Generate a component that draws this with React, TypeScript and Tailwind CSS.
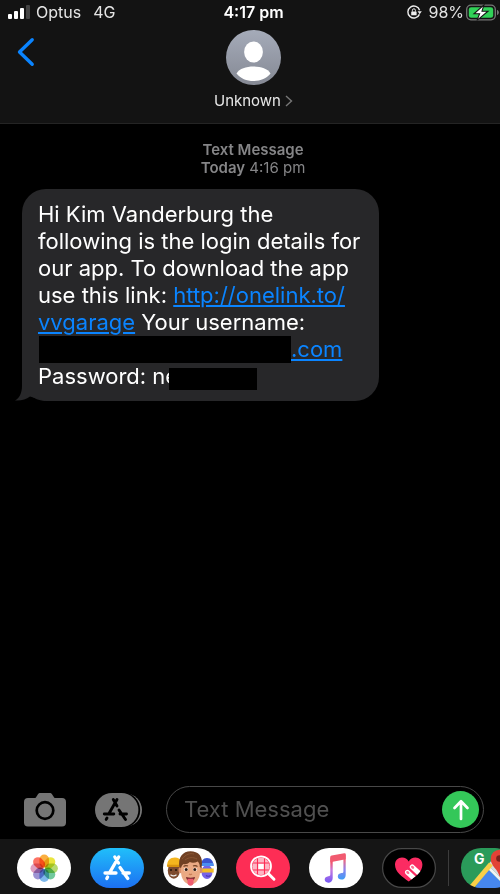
import React from 'react';

const SignalIcon = () => (
  <svg width="22" height="14" viewBox="0 0 22 14" aria-hidden="true">
    <rect x="0" y="9" width="4" height="5" rx="1" fill="#fff" />
    <rect x="6" y="6" width="4" height="8" rx="1" fill="#fff" />
    <rect x="12" y="3" width="4" height="11" rx="1" fill="#fff" />
    <rect x="18" y="0" width="4" height="14" rx="1" fill="#444" />
  </svg>
);

const RotationLockIcon = () => (
  <svg width="16" height="16" viewBox="0 0 16 16" fill="none" aria-hidden="true">
    <path d="M13.6 6.2A6 6 0 1 0 13.4 10.4" stroke="#eee" strokeWidth="1.4" />
    <path d="M11.6 7.2h4.2l-2.1 3z" fill="#eee" />
    <rect x="5.2" y="7.4" width="5.4" height="3.9" rx=".6" fill="#eee" />
    <path d="M6.4 7.6V6.3a1.5 1.5 0 0 1 3 0v1.3" stroke="#eee" strokeWidth="1" />
  </svg>
);

const BatteryIcon = () => (
  <svg width="33" height="17" viewBox="0 0 33 17" aria-hidden="true">
    <rect x=".7" y="1.2" width="28.6" height="14.6" rx="4.2" fill="none" stroke="#777" strokeWidth="1.3" />
    <path d="M31 6v5c1.2-.3 1.9-1.3 1.9-2.5S32.2 6.3 31 6z" fill="#777" />
    <rect x="2.8" y="3.2" width="24.4" height="10.6" rx="2.4" fill="#31d158" />
    <path d="M18 .8 8 9.8h5.600L11 16.400l11-9.200h-6z" fill="#fff" stroke="#131313" strokeWidth="1.100" />
  </svg>
);

const Avatar = () => (
  <svg width="55" height="55" viewBox="0 0 55 55" aria-hidden="true">
    <defs>
      <linearGradient id="avatarFill" x1="0" y1="0" x2="0" y2="1">
        <stop offset="0" stopColor="#a5abb9" />
        <stop offset="1" stopColor="#858994" />
      </linearGradient>
    </defs>
    <circle cx="27.5" cy="27.5" r="27.5" fill="url(#avatarFill)" />
    <ellipse cx="27.5" cy="22" rx="9.4" ry="10.5" fill="#fff" />
    <path d="M10.5 43.5C13.5 38.500 20 36.500 27.500 36.500s14 2 17 7c-4 5-10 7.500-17 7.500s-13-2.500-17-7.500z" fill="#fff" />
  </svg>
);

const CameraIcon = () => (
  <svg width="42" height="34" viewBox="0 0 42 34" aria-hidden="true">
    <path
      d="M4 5h6.5c1 0 1.4-.5 2-1.5l1-1.6C14.2.6 15 0 16.4 0h9.2c1.4 0 2.2.6 2.9 1.9l1 1.6c.6 1 1 1.5 2 1.5H38a4 4 0 0 1 4 4v20.5a4 4 0 0 1-4 4H4a4 4 0 0 1-4-4V9a4 4 0 0 1 4-4z"
      fill="#757575"
    />
    <circle cx="21" cy="17.5" r="8.3" fill="none" stroke="#000" strokeWidth="2.7" />
  </svg>
);

const AppsIcon = () => (
  <svg width="47" height="34" viewBox="0 0 47 34" aria-hidden="true">
    <rect x="5" y="0.5" width="42" height="33" rx="16.5" fill="#757575" />
    <rect x="2" y="-1" width="43.2" height="36" rx="18" fill="#000" />
    <rect x="0" y="0" width="43.4" height="34" rx="17" fill="#757575" />
    <path
      d="M18.300 6.500 22 13M24 17l6.500 9.500M22 6.500 14 20.500M12 25l-.8 1.400M9.300 21h9.500M25 21h6.500"
      stroke="#000"
      strokeWidth="2.9"
      strokeLinecap="round"
      fill="none"
    />
  </svg>
);

const petals = ['#f9a01f', '#e6e01c', '#a9d257', '#58c08c', '#66ace8', '#8c80cb', '#d98fb6', '#fb5a4a'];

const PhotosIcon = () => (
  <svg width="54" height="40" viewBox="0 0 54 40" aria-hidden="true">
    <rect width="54" height="40" rx="20" fill="#fff" />
    {petals.map((color, i) => (
      <rect
        key={color}
        x="22.4"
        y="6.6"
        width="9.6"
        height="13"
        rx="4.8"
        fill={color}
        fillOpacity=".85"
        transform={`rotate(${i * 45} 27.2 20.3)`}
        className="mix-blend-multiply"
      />
    ))}
  </svg>
);

const AppStoreIcon = () => (
  <svg width="54" height="40" viewBox="0 0 54 40" aria-hidden="true">
    <defs>
      <linearGradient id="storeFill" x1="0" y1="0" x2="0" y2="1">
        <stop offset="0" stopColor="#20bffa" />
        <stop offset="1" stopColor="#1c70f2" />
      </linearGradient>
    </defs>
    <rect width="54" height="40" rx="20" fill="url(#storeFill)" />
    <path
      d="M24.8 9 28.5 15M30 19.5 37.8 30.5M28.7 9 19.5 24.8M17.6 29l-.8 1.6M15 25h11M33 25h6.3"
      stroke="#fff"
      strokeWidth="3.3"
      strokeLinecap="round"
      fill="none"
    />
  </svg>
);

const MemojiIcon = () => (
  <svg width="54" height="40" viewBox="0 0 54 40" aria-hidden="true">
    <rect width="54" height="40" rx="20" fill="#fff" />
    {/* left face with the yellow beanie */}
    <ellipse cx="10.8" cy="22.5" rx="6" ry="8.3" fill="#7d4b2e" />
    <path d="M4 18.500c0-6 3-9 8-9 3 0 5 1.500 6 3.500v5.500H4z" fill="#f4b51e" />
    <path d="M4 16.800h13v2.200H4.500z" fill="#d8920f" />
    <circle cx="8" cy="22" r="1" fill="#22130b" />
    <circle cx="13" cy="22" r="1" fill="#22130b" />
    <path d="M7.500 26.800c2 1.500 4 1.500 6 0" stroke="#eee" strokeWidth="1.200" fill="none" />
    {/* right face with the blue hat */}
    <ellipse cx="44" cy="24" rx="5.5" ry="7" fill="#7563e8" />
    <path d="M38 18c0-5 2-8 6-8s6.500 3 6.500 8z" fill="#3a55d0" />
    <path d="M38 15h12.200l.5 3H38z" fill="#4b8ff0" />
    <path d="M38 20.500h12.700v4H38z" fill="#f3bd25" />
    <path d="M43 27.500c1.500 1 3 1 4.500 0" stroke="#4a36b0" strokeWidth="1.200" fill="none" />
    {/* front face */}
    <ellipse cx="17.8" cy="22" rx="2.3" ry="3.3" fill="#d98f69" />
    <ellipse cx="37.2" cy="22" rx="2.3" ry="3.3" fill="#d98f69" />
    <path d="M18 17c0-7 4-10 9.500-10S37 10 37 17v7c0 7-4.500 12.500-9.500 12.500S18 31 18 24z" fill="#eaa983" />
    <path d="M16.500 20C14.500 9 20 3.300 27.500 3.300S41 8 38.500 20L36.800 19c0-2.500-.5-4-2-5.500-3 1.500-6 1.500-8 .5-2 2-4.500 2.500-6.300 2-1.200 1-2 2-2.200 3.500z" fill="#704023" />
    <path d="M19 11c4-5 8-6 12-5M22 12c4-3 8-3 12-1" stroke="#8a5531" strokeWidth="1" fill="none" />
    <path d="M20.500 18.500c1.500-1.100 3-1.100 4.500-.4M30 18.100c1.500-.7 3-.7 4.500.4" stroke="#704023" strokeWidth="1.100" fill="none" />
    <ellipse cx="23" cy="21.500" rx="2.100" ry="1.800" fill="#fff" />
    <ellipse cx="32" cy="21.500" rx="2.100" ry="1.800" fill="#fff" />
    <circle cx="23.200" cy="21.500" r="1.500" fill="#32190e" />
    <circle cx="31.800" cy="21.500" r="1.500" fill="#32190e" />
    <path d="M26 26c1 .8 2 .8 3 0" stroke="#c77d57" strokeWidth="1.200" fill="none" />
    <path d="M23 29c3 1 6 1 9 0-.5 3-2.300 4-4.500 4S23.500 32 23 29z" fill="#75242b" />
    <path d="M24.500 30.800h6v4c0 4-6 4-6 0z" fill="#ef5d70" />
  </svg>
);

const ImageSearchIcon = () => (
  <svg width="54" height="40" viewBox="0 0 54 40" aria-hidden="true">
    <defs>
      <clipPath id="lens">
        <circle cx="25" cy="18.3" r="8.7" />
      </clipPath>
    </defs>
    <rect width="54" height="40" rx="20" fill="#fd2d55" />
    <g clipPath="url(#lens)">
      <rect x="15" y="8" width="20" height="20" fill="#fdb5c4" />
      <rect x="22.3" y="16" width="5.4" height="5" fill="#fff" />
      <path d="M21.5 8v21M28.5 8v21M15 15h20M15 22h20" stroke="#fd2d55" strokeWidth="1.1" />
    </g>
    <circle cx="25" cy="18.3" r="10" fill="none" stroke="#fff" strokeWidth="1.8" />
    <path d="M32.5 25.8 38 31.2" stroke="#fff" strokeWidth="2.9" strokeLinecap="round" />
  </svg>
);

const MusicIcon = () => (
  <svg width="54" height="40" viewBox="0 0 54 40" aria-hidden="true">
    <defs>
      <linearGradient id="leftNote" x1="0" y1="0" x2="0" y2="1">
        <stop offset=".2" stopColor="#f2566f" />
        <stop offset=".5" stopColor="#c57ae0" />
        <stop offset="1" stopColor="#7457f4" />
      </linearGradient>
      <linearGradient id="rightNote" x1="0" y1="0" x2="0" y2="1">
        <stop offset=".2" stopColor="#f2667c" />
        <stop offset=".6" stopColor="#8d83ee" />
        <stop offset="1" stopColor="#3c9df6" />
      </linearGradient>
    </defs>
    <rect width="54" height="40" rx="20" fill="#fff" />
    <path d="M21.300 9.500h2.400V30c0 3-2 4.700-4.500 4.700-2 0-3.500-1.300-3.500-3.100 0-2 1.500-3 3.600-3.400 1.500-.3 2-.6 2-1.700z" fill="url(#leftNote)" />
    <path d="M34.400 6.500h2.300v20.400c0 3-1.900 4.700-4.400 4.700-2 0-3.500-1.300-3.500-3.100 0-2 1.500-3 3.600-3.400 1.500-.3 2-.6 2-1.700z" fill="url(#rightNote)" />
    <path d="M21.300 9.300c0-1 .4-1.500 1.400-1.700l12.500-2.300c1-.2 1.500.2 1.500 1.200v4.800l-15.400 2.900z" fill="#f15a70" />
  </svg>
);

const DigitalTouchIcon = () => (
  <svg width="54" height="40" viewBox="0 0 54 40" aria-hidden="true">
    <defs>
      <clipPath id="heart">
        <path d="M26.700 33.500C20 28.500 13 24 13 16.700c0-4.200 3-7.200 7-7.200 3 0 5.300 1.500 6.700 4 1.400-2.500 3.700-4 6.700-4 4 0 7 3 7 7.200 0 7.300-7 11.800-13.700 16.800z" />
      </clipPath>
    </defs>
    <rect x=".6" y=".6" width="52.8" height="38.8" rx="19.4" fill="#000" stroke="#484848" strokeWidth="1.2" />
    <g clipPath="url(#heart)">
      <rect x="12" y="8" width="30" height="27" fill="#fb2b62" />
      <path d="M30.300 19 41 29M25.500 24.300 36 34" stroke="#fff" strokeWidth="5" strokeLinecap="round" />
      <path d="m30.200 18.900.8.8M25.400 24.200l.8.8" stroke="#fb6f92" strokeWidth="2.400" strokeLinecap="round" />
    </g>
  </svg>
);

const MapsIcon = () => (
  <svg width="54" height="40" viewBox="0 0 54 40" aria-hidden="true">
    <defs>
      <clipPath id="mapPill">
        <rect width="54" height="40" rx="20" />
      </clipPath>
    </defs>
    <g clipPath="url(#mapPill)">
      <rect width="54" height="40" fill="#2a9b5a" />
      <path d="M12 42 27 21 48 42z" fill="#4687ee" />
      <path d="M27 17 54 44V14L34 8z" fill="#d7dbdf" />
      <path d="m27.500 19.500 22 22" stroke="#f3f3f3" strokeWidth="3" />
      <path d="M8 42 30 16" stroke="#f9cf48" strokeWidth="5" />
      <path d="M38.500 29c-1-8-8.800-10-8.800-18.500a8.800 8.800 0 0 1 17.600 0C47.300 19 39.500 21 38.500 29z" fill="#e24236" />
      <circle cx="38.5" cy="10.5" r="3.3" fill="#7b211c" />
      <text x="13" y="16" fill="#fff" fontSize="14" fontWeight="700" fontFamily="Inter, sans-serif">G</text>
    </g>
  </svg>
);

const apps = [
  { name: 'Photos', Icon: PhotosIcon },
  { name: 'App Store', Icon: AppStoreIcon },
  { name: 'Memoji Stickers', Icon: MemojiIcon },
  { name: 'Image search', Icon: ImageSearchIcon },
  { name: 'Music', Icon: MusicIcon },
  { name: 'Digital Touch', Icon: DigitalTouchIcon },
];

const StatusBar: React.FC = () => (
  <div className="grid grid-cols-[1fr_auto_1fr] items-center h-6 pl-2 pr-px text-base text-[#e4e4e4]">
    <div className="flex items-center gap-[6px]">
      <SignalIcon />
      <span>Optus</span>
      <span className="ml-[6px]">4G</span>
    </div>
    <span className="font-semibold text-white">4:17 pm</span>
    <div className="flex items-center justify-end">
      <RotationLockIcon />
      <span className="ml-[6px] mr-[2px]">98%</span>
      <BatteryIcon />
    </div>
  </div>
);

const ChatHeader: React.FC = () => (
  <div className="grid grid-cols-[1fr_auto_1fr] items-start pl-[17px] pr-[10px] pt-[6px]">
    <button type="button" aria-label="Back" className="mt-[7px] w-fit">
      <svg width="18" height="30" viewBox="0 0 18 30" fill="none" aria-hidden="true">
        <path d="M15.2 2.7 2.5 15l12.7 12.3" stroke="#0a84ff" strokeWidth="3.4" strokeLinecap="round" strokeLinejoin="round" />
      </svg>
    </button>
    <button type="button" className="flex flex-col items-center gap-[6px]">
      <Avatar />
      <span className="flex items-center gap-1 text-[15px] leading-5 text-[#e8e8e8]">
        Unknown
        <svg width="8" height="12" viewBox="0 0 8 12" fill="none" aria-hidden="true">
          <path d="m1 1 5.5 5L1 11" stroke="#777" strokeWidth="1.4" />
        </svg>
      </span>
    </button>
  </div>
);

const MessageBubble: React.FC = () => (
  <div className="relative ml-[22px] w-[357px] max-w-[90%] rounded-[24px] bg-[#272729] pl-4 pr-3 pt-3 pb-[11px] text-[22px] leading-[27px] text-white">
    <svg className="absolute -left-[7px] bottom-0" width="30" height="24" viewBox="0 0 30 24" aria-hidden="true">
      <path d="M7 0v9c0 7-2.500 12-7 14.500 6 .5 11-1 15-4L30 24V0z" fill="#272729" />
    </svg>
    <p className="relative whitespace-nowrap">
      Hi Kim Vanderburg the<br />
      following is the login details for<br />
      our app. To download the app<br />
      use this link:{' '}
      <a href="#garage" className="text-[#0a84ff] underline decoration-2 underline-offset-2">
        http://onelink.to/<br />
        vvgarage
      </a>{' '}
      Your username:<br />
      <a href="#username" className="text-[#0a84ff] underline decoration-2 underline-offset-2">
        <span className="ml-px inline-block h-[27px] w-[252px] bg-black align-top" />
        .com
      </a>
      <br />
      Password: ne
      <span className="relative -ml-[9px] mt-[5px] inline-block h-[22px] w-[88px] bg-black align-top" />
    </p>
  </div>
);

const Composer: React.FC = () => (
  <form className="flex items-center pl-6 pr-4 pb-[6px]" onSubmit={(e) => e.preventDefault()}>
    <button type="button" aria-label="Camera" className="shrink-0">
      <CameraIcon />
    </button>
    <button type="button" aria-label="Apps" className="ml-[29px] shrink-0">
      <AppsIcon />
    </button>
    <div className="ml-6 flex h-[47px] min-w-0 flex-1 items-center rounded-full border border-[#484848] pl-[17px] pr-1">
      <input
        type="text"
        aria-label="Text Message"
        placeholder="Text Message"
        className="min-w-0 flex-1 bg-transparent text-[22px] text-white outline-none placeholder:text-[#505050]"
      />
      <button type="submit" aria-label="Send" className="flex size-[37px] shrink-0 items-center justify-center rounded-full bg-[#34c759]">
        <svg width="18" height="22" viewBox="0 0 18 22" fill="none" aria-hidden="true">
          <path d="M9 20V2.5M2.5 9 9 2.3 15.5 9" stroke="#fff" strokeWidth="2.7" strokeLinecap="round" strokeLinejoin="round" />
        </svg>
      </button>
    </div>
  </form>
);

const AppDrawer: React.FC = () => (
  <nav aria-label="iMessage apps" className="flex h-[55px] items-center gap-[19px] overflow-hidden bg-[#151515] pl-[17px] pt-[2px]">
    {apps.map(({ name, Icon }) => (
      <button key={name} type="button" aria-label={name} className="shrink-0">
        <Icon />
      </button>
    ))}
    <div className="-ml-[7px] flex shrink-0 items-center gap-3">
      <div className="h-9 w-px bg-[#3c3c3c]" />
      <button type="button" aria-label="Google Maps">
        <MapsIcon />
      </button>
    </div>
  </nav>
);

const App: React.FC = () => {
  return (
    <div className="flex min-h-screen flex-col overflow-hidden bg-black font-['Inter',sans-serif]">
      <header className="border-b border-[#242424] bg-[#131313] pb-3">
        <StatusBar />
        <ChatHeader />
      </header>
      <main className="flex-1">
        <div className="pl-[6px] pt-[17px] pb-3 text-center text-[15px] leading-[18px] text-[#858587]">
          <p className="font-semibold">Text Message</p>
          <p>
            <span className="font-semibold">Today</span> 4:16 pm
          </p>
        </div>
        <MessageBubble />
      </main>
      <footer>
        <Composer />
        <AppDrawer />
      </footer>
    </div>
  );
};

export default App;
